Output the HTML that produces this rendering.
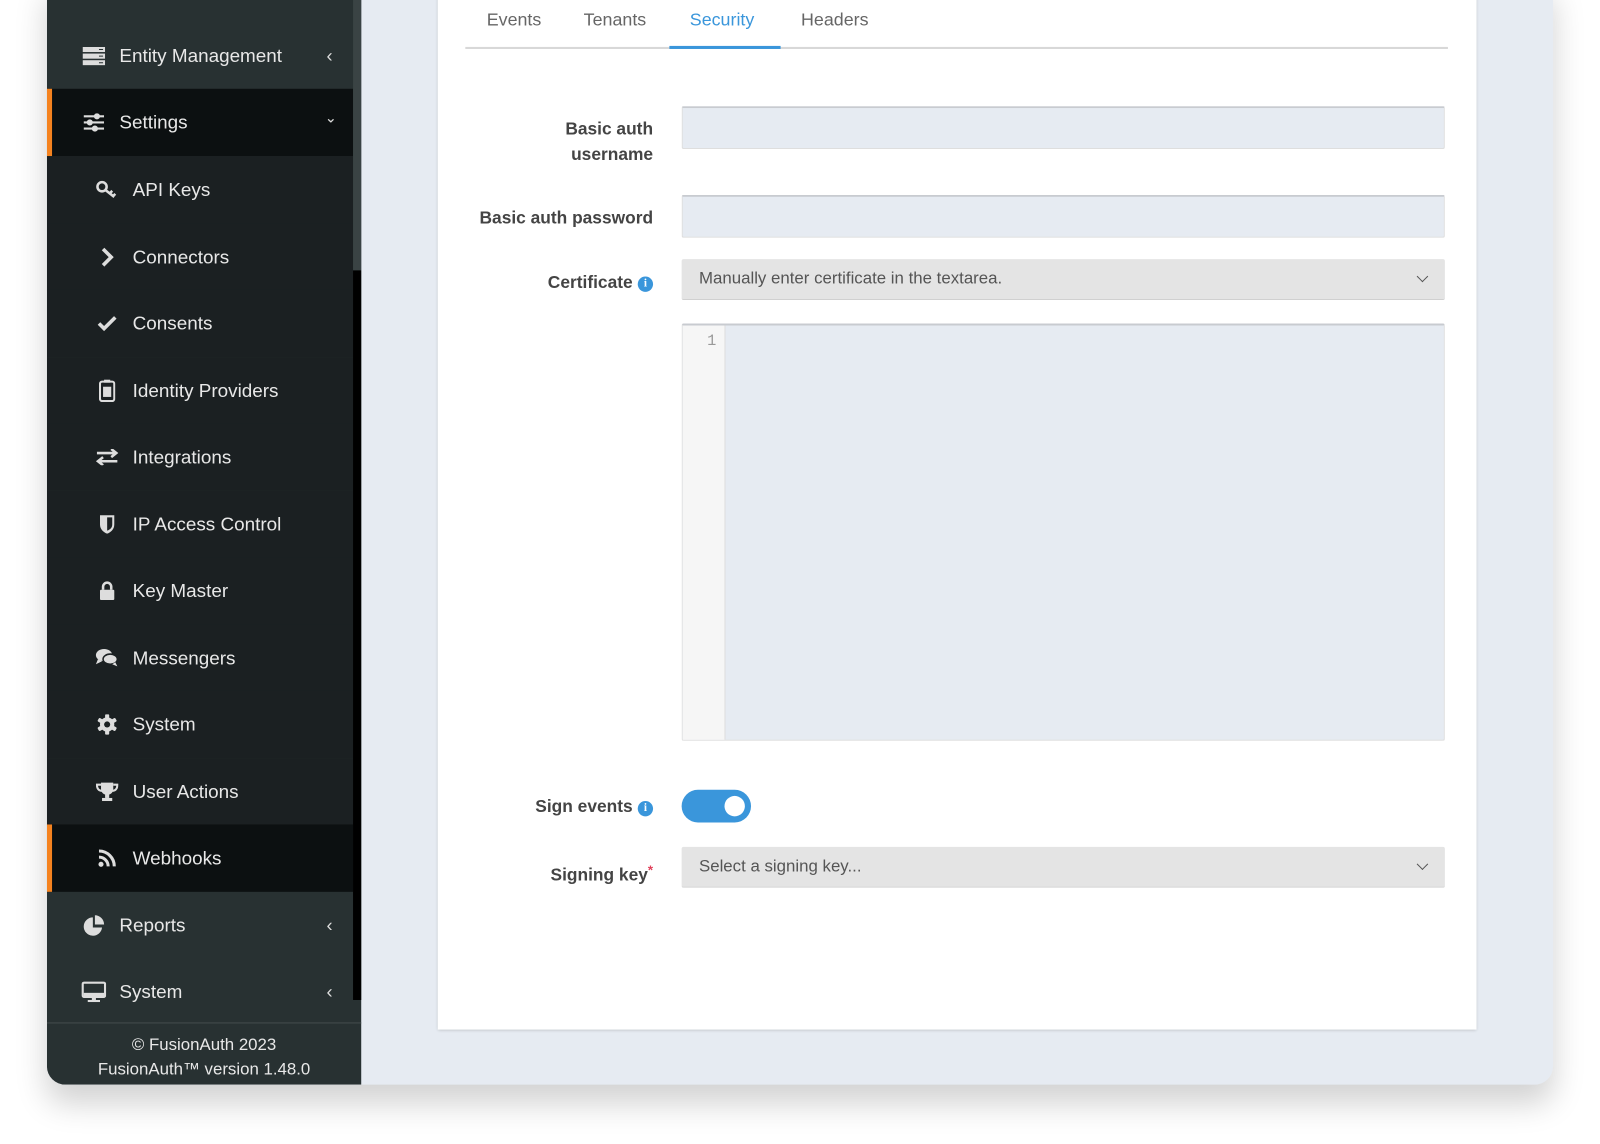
<!DOCTYPE html>
<html><head><meta charset="utf-8"><style>
*{box-sizing:border-box;margin:0;padding:0}
body{width:1600px;height:1144px;background:#fff;font-family:"Liberation Sans",sans-serif;position:relative;overflow:hidden}
.wrap{position:absolute;left:0;top:0;width:1568px;height:1121px;transform:scale(1.0204);transform-origin:0 0}
.win{position:absolute;left:46px;top:-20px;width:1476px;height:1083px;border-radius:0 0 18px 18px;overflow:hidden;background:#e6ebf2;box-shadow:0 18px 30px rgba(0,0,0,.18)}
.side{position:absolute;left:0;top:0;width:308px;height:1083px;background:#283132}
.sb{position:absolute;left:300px;top:20px;width:8px;height:265px;background:#3a4344}
.sb2{position:absolute;left:300px;top:285px;width:8px;height:715px;background:#000}
.row{position:absolute;left:0;width:300px;height:66px;color:#e8e8e8;font-size:18.5px;display:flex;align-items:center}
.row .ic{position:absolute;width:24px;text-align:center;display:flex;justify-content:center}
.row.top .ic{left:34px}.row.top span.t{position:absolute;left:71px}
.row.sub{background:#1b2022}.row.sub .ic{left:47px}.row.sub span.t{position:absolute;left:84px}
.row.act{background:#0c1011;border-left:5px solid #f58320}
.row .ar{position:absolute;right:20px;font-size:18px;color:#ddd}
.foot{position:absolute;left:0;top:1022px;width:308px;height:61px;border-top:1px solid #444c4d;color:#e8e8e8;font-size:16.5px;text-align:center;padding-top:9px;line-height:24px}
.card{position:absolute;left:383px;top:0;width:1018px;height:1029px;background:#fff;box-shadow:0 1px 3px rgba(0,0,0,.2)}
.tabs{position:absolute;left:456px;top:0;width:963px;height:48px;border-bottom:2px solid #d8d8d8}
.tab{position:absolute;top:9px;font-size:17.5px;color:#666}
.lbl{position:absolute;left:0;width:640px;text-align:right;font-size:17px;font-weight:bold;color:#444;line-height:25px}
.inp{position:absolute;left:668px;width:748px;background:#e6ebf2;border:1px solid #ddd;border-top:2px solid #c8cbd0;border-radius:2px}
.sel{position:absolute;left:668px;width:748px;height:40px;background:#e4e4e4;border-radius:2px;border-bottom:1px solid #d0d0d0;font-size:16.5px;color:#555;padding:10px 17px}
.sel:after{content:"";position:absolute;right:18px;top:13px;width:7px;height:7px;border-right:1.6px solid #555;border-bottom:1.6px solid #555;transform:rotate(45deg)}
.info{display:inline-block;width:15px;height:15px;border-radius:50%;background:#3a96db;color:#fff;font-size:11px;line-height:15px;text-align:center;font-family:"Liberation Serif",serif;font-weight:bold;vertical-align:1px;margin-left:5px}
</style></head><body><div class="wrap">
<div class="win">
<div class="side">
<div class="row top" style="top:42px"><span class="ic"><svg width="22" height="18" viewBox="0 0 22 18"><g fill="#ddd"><rect x="0" y="0" width="22" height="5"/><rect x="0" y="6.5" width="22" height="5"/><rect x="0" y="13" width="22" height="5"/></g><g fill="#283132"><rect x="16" y="2" width="4" height="1"/><rect x="16" y="8.5" width="4" height="1"/><rect x="16" y="15" width="4" height="1"/></g></svg></span><span class="t">Entity Management</span><span class="ar">‹</span></div>
<div class="row top act" style="top:107px;left:0"><span class="ic" style="left:29px"><svg width="20" height="18" viewBox="0 0 20 18" stroke="#ddd" stroke-width="2"><line x1="0" y1="3" x2="20" y2="3"/><line x1="0" y1="9" x2="20" y2="9"/><line x1="0" y1="15" x2="20" y2="15"/><g fill="#ddd"><circle cx="13" cy="3" r="2"/><circle cx="6" cy="9" r="2"/><circle cx="11" cy="15" r="2"/></g></svg></span><span class="t" style="left:66px">Settings</span><span class="ar" style="font-size:14px;right:16px;top:20px">⌄</span></div>
<div class="row sub" style="top:173px"><span class="ic"><svg width="22" height="20" viewBox="0 0 22 20"><circle cx="6" cy="7" r="4.5" fill="none" stroke="#ddd" stroke-width="2.5"/><path d="M9 10 L18 17 M14 13l2-2 M17 16l2-2" stroke="#ddd" stroke-width="2.5"/></svg></span><span class="t">API Keys</span></div>
<div class="row sub" style="top:239px"><span class="ic"><svg width="14" height="20"><path d="M3 2l8 8-8 8" fill="none" stroke="#ddd" stroke-width="3.5"/></svg></span><span class="t">Connectors</span></div>
<div class="row sub" style="top:304px"><span class="ic"><svg width="20" height="16"><path d="M2 8l5 5 11-11" fill="none" stroke="#ddd" stroke-width="3.5"/></svg></span><span class="t">Consents</span></div>
<div class="row sub" style="top:370px"><span class="ic"><svg width="16" height="22"><rect x="1" y="2" width="14" height="19" rx="2" fill="none" stroke="#ddd" stroke-width="2"/><rect x="4" y="7" width="8" height="10" fill="#ddd"/><rect x="5" y="0" width="6" height="3" fill="#ddd"/></svg></span><span class="t">Identity Providers</span></div>
<div class="row sub" style="top:435px"><span class="ic"><svg width="22" height="16"><path d="M1 4h18M15 0l5 4-5 4M21 12H3M7 8l-5 4 5 4" fill="none" stroke="#ddd" stroke-width="2.5"/></svg></span><span class="t">Integrations</span></div>
<div class="row sub" style="top:501px"><span class="ic"><svg width="16" height="20"><path d="M1 1h14v9c0 5-4 8-7 9C5 18 1 15 1 10z" fill="#ddd"/><path d="M8 3h5v7c0 3-2 5-5 6z" fill="#1b2022"/></svg></span><span class="t">IP Access Control</span></div>
<div class="row sub" style="top:566px"><span class="ic"><svg width="16" height="20"><path d="M4 9V6a4 4 0 0 1 8 0v3" fill="none" stroke="#ddd" stroke-width="2.5"/><rect x="1" y="9" width="14" height="10" rx="1" fill="#ddd"/></svg></span><span class="t">Key Master</span></div>
<div class="row sub" style="top:632px"><span class="ic"><svg width="24" height="20"><ellipse cx="9" cy="7" rx="8" ry="6" fill="#ddd"/><path d="M3 11l-2 5 6-3z" fill="#ddd"/><ellipse cx="15" cy="11" rx="7" ry="5" fill="#ddd" stroke="#1b2022" stroke-width="1.5"/><path d="M20 14l2 4-5-2z" fill="#ddd"/></svg></span><span class="t">Messengers</span></div>
<div class="row sub" style="top:697px"><span class="ic"><svg width="20" height="20" viewBox="0 0 20 20"><g fill="#ddd"><circle cx="10" cy="10" r="7"/><rect x="8" y="0" width="4" height="20" rx="1"/><rect x="8" y="0" width="4" height="20" rx="1" transform="rotate(60 10 10)"/><rect x="8" y="0" width="4" height="20" rx="1" transform="rotate(120 10 10)"/></g><circle cx="10" cy="10" r="3" fill="#1b2022"/></svg></span><span class="t">System</span></div>
<div class="row sub" style="top:763px"><span class="ic"><svg width="22" height="20"><path d="M5 1h12v6c0 4-3 6-6 6S5 11 5 7z" fill="#ddd"/><path d="M5 3H1c0 4 2 6 5 6M17 3h4c0 4-2 6-5 6" fill="none" stroke="#ddd" stroke-width="2"/><rect x="9" y="12" width="4" height="4" fill="#ddd"/><rect x="6" y="16" width="10" height="3" fill="#ddd"/></svg></span><span class="t">User Actions</span></div>
<div class="row sub act" style="top:828px"><span class="ic" style="left:42px"><svg width="18" height="18"><circle cx="3" cy="15" r="2.5" fill="#ddd"/><path d="M1 8a9 9 0 0 1 9 9M1 2a15 15 0 0 1 15 15" fill="none" stroke="#ddd" stroke-width="3"/></svg></span><span class="t" style="left:79px">Webhooks</span></div>
<div class="row top" style="top:894px"><span class="ic"><svg width="22" height="22"><path d="M10 3a9 9 0 1 0 9 10h-9z" fill="#ddd"/><path d="M12 1a9 9 0 0 1 9 9h-9z" fill="#ddd"/></svg></span><span class="t">Reports</span><span class="ar">‹</span></div>
<div class="row top" style="top:959px"><span class="ic"><svg width="24" height="21"><rect x="1" y="1" width="22" height="14" rx="1.5" fill="none" stroke="#ddd" stroke-width="2.2"/><rect x="2" y="11" width="20" height="4" fill="#ddd"/><rect x="10" y="15" width="4" height="3" fill="#ddd"/><rect x="6" y="18" width="12" height="2" fill="#ddd"/></svg></span><span class="t">System</span><span class="ar">‹</span></div>
<div class="sb"></div><div class="sb2"></div>
<div class="foot">© FusionAuth 2023<br>FusionAuth™ version 1.48.0</div>
</div>
<div class="card"></div>
</div>
<div class="tabs">
<span class="tab" style="left:21px">Events</span>
<span class="tab" style="left:116px">Tenants</span>
<span class="tab" style="left:220px;color:#3a96db">Security</span>
<span class="tab" style="left:329px">Headers</span>
<div style="position:absolute;left:200px;width:109px;bottom:-2px;height:3px;background:#3a96db"></div>
</div>
<div class="lbl" style="top:114px">Basic auth<br>username</div>
<div class="inp" style="top:104px;height:42px"></div>
<div class="lbl" style="top:201px">Basic auth password</div>
<div class="inp" style="top:191px;height:42px"></div>
<div class="lbl" style="top:264px">Certificate<span class="info">i</span></div>
<div class="sel" style="top:254px">Manually enter certificate in the textarea.</div>
<div class="inp" style="top:317px;height:409px"><div style="position:absolute;left:0;top:0;width:42px;height:100%;background:#f6f6f6;border-right:1px solid #ddd;text-align:right;padding:7px 8px 0 0;color:#999;font-family:'Liberation Mono',monospace;font-size:15px">1</div></div>
<div class="lbl" style="top:778px">Sign events<span class="info">i</span></div>
<div style="position:absolute;left:668px;top:774px;width:68px;height:32px;border-radius:16px;background:#3a96db"><div style="position:absolute;right:6px;top:6px;width:20px;height:20px;border-radius:50%;background:#fff"></div></div>
<div class="lbl" style="top:840px">Signing key<span style="color:#e0405a;font-size:13px;vertical-align:6px">*</span></div>
<div class="sel" style="top:830px">Select a signing key...</div>
</div></body></html>
